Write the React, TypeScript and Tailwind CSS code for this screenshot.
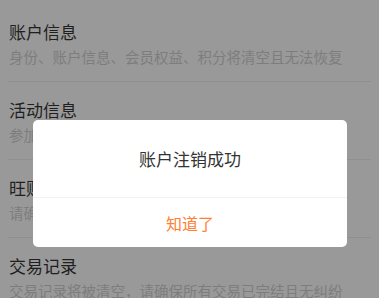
export default function App() {
  const rows = [
    { title: "账户信息", desc: "身份、账户信息、会员权益、积分将清空且无法恢复" },
    { title: "活动信息", desc: "参加的活动信息将被清空，活动奖励无法领取" },
    { title: "旺财账户", desc: "请确认旺财账户内无余额且无未完成的业务" },
    { title: "交易记录", desc: "交易记录将被清空，请确保所有交易已完结且无纠纷" },
  ];

  return (
    <div
      className="relative h-[298px] w-[379px] overflow-hidden bg-[#999999]"
      style={{ fontFamily: '"Noto Sans CJK SC", "Noto Sans", sans-serif' }}
    >
      <div className="px-2 pt-1">
        {rows.map((row) => (
          <div key={row.title} className="border-b border-[#8f8f8f] pt-4 pb-[14px] pl-px">
            <div className="text-[17px] leading-6 text-[#1f1f1f]">{row.title}</div>
            <div className="mt-[3px] whitespace-nowrap text-[14.5px] leading-5 text-[#7d7d7d]">
              {row.desc}
            </div>
          </div>
        ))}
      </div>

      {/* 弹窗 */}
      <div className="absolute left-[33px] top-[120px] flex h-[127px] w-[314px] flex-col rounded-[5px] bg-white">
        <div className="flex flex-1 items-center justify-center pt-[1px] text-[17px] text-[#333333]">
          账户注销成功
        </div>
        <div className="flex h-[50px] items-center justify-center border-t border-[#f2f2f2] text-[16px] text-[#ff8033]">
          知道了
        </div>
      </div>
    </div>
  );
}
